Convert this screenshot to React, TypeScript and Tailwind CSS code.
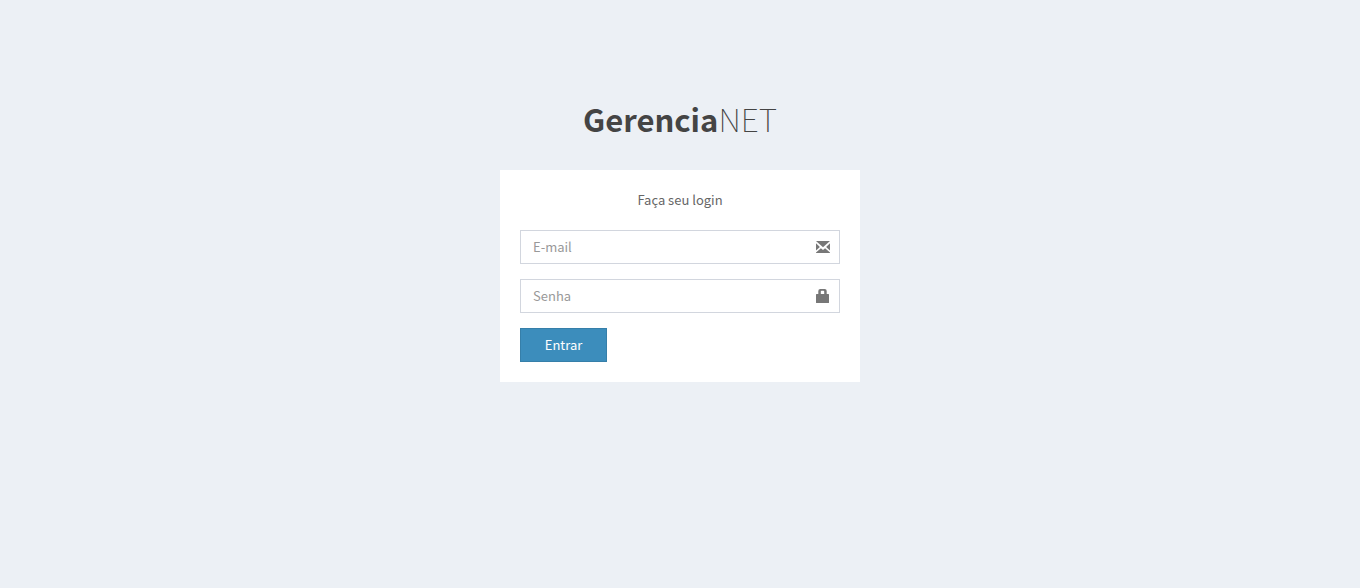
import type { ReactNode } from 'react';

function EnvelopeIcon() {
  return (
    <svg viewBox="0 0 14 12" className="h-3 w-3.5" fill="currentColor" aria-hidden="true">
      <path d="M0 0h14L7 6.300z" />
      <path d="M0 2.200 3.900 6 0 9.600z" />
      <path d="M14 2.200 10.100 6l3.900 3.600z" />
      <path d="M0 12v-.4l4.900-4.400L7 9l2.100-1.800 4.900 4.400v.4z" />
    </svg>
  );
}

function LockIcon() {
  return (
    <svg viewBox="0 0 14 14" className="size-3.5" fill="currentColor" aria-hidden="true">
      <path
        fillRule="evenodd"
        d="M2.300 5V2a2 2 0 0 1 2-2h4.400a2 2 0 0 1 2 2v3h1.700a.6.6 0 0 1 .6.6v7.800a.6.6 0 0 1-.6.6H.6a.6.6 0 0 1-.6-.6V5.600a.6.6 0 0 1 .6-.6zM4.800 5h3.400V2.500a.8.8 0 0 0-.8-.8H5.600a.8.8 0 0 0-.8.8z"
      />
    </svg>
  );
}

type FieldProps = {
  id: string;
  label: string;
  type: string;
  icon: ReactNode;
};

function Field({ id, label, type, icon }: FieldProps) {
  return (
    <label
      htmlFor={id}
      className="flex h-[34px] items-center border border-[#d2d6de] bg-white pr-2 focus-within:border-[#3c8dbc]"
    >
      <input
        id={id}
        name={id}
        type={type}
        placeholder={label}
        aria-label={label}
        className="h-full min-w-0 flex-1 bg-transparent px-3 pb-0.5 text-[13px] leading-5 text-[#555555] outline-none placeholder:text-[#999999]"
      />
      <span className="flex w-[15px] text-[#777777]">{icon}</span>
    </label>
  );
}

export default function App() {
  return (
    <div className="flow-root min-h-screen bg-[#ecf0f5] font-['Noto_Sans_CJK_SC',sans-serif] text-[13px] leading-5 text-[#333333]">
      <main className="mx-auto mt-[7%] w-full max-w-[360px]">
        <h1 className="mb-7 text-center text-[32px] leading-[47px] font-thin text-[#444444]">
          <a href="#">
            <b className="text-[31px] font-bold">Gerencia</b>NET
          </a>
        </h1>
        <section className="bg-white p-5 text-[#666666]">
          <p className="pb-5 text-center">Faça seu login</p>
          <form className="flex flex-col gap-[15px]" onSubmit={(event) => event.preventDefault()}>
            <Field id="email" label="E-mail" type="email" icon={<EnvelopeIcon />} />
            <Field id="senha" label="Senha" type="password" icon={<LockIcon />} />
            <button
              type="submit"
              className="h-[34px] w-[87px] cursor-pointer border border-[#367fa9] bg-[#3c8dbc] text-white hover:bg-[#367fa9]"
            >
              Entrar
            </button>
          </form>
        </section>
      </main>
    </div>
  );
}
